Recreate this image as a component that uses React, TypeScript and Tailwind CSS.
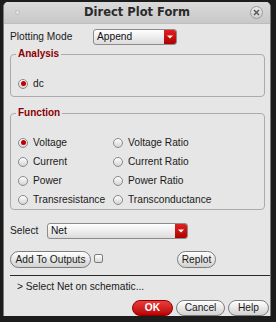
import React from "react";

const font = { fontFamily: '"Liberation Sans", Arial, sans-serif' };

function Radio({ label, checked = false }: { label: string; checked?: boolean }) {
  return (
    <div className="flex items-center h-[19px]">
      <span className="relative w-[10px] h-[10px] rounded-full border border-[#8a8a8a] bg-gradient-to-b from-white to-[#d4d4d4] flex items-center justify-center shrink-0">
        {checked && <span className="w-[5px] h-[5px] rounded-full bg-[#c00000]" />}
      </span>
      <span className="ml-[5px] text-[10.2px] text-[#1a1a1a] whitespace-nowrap">{label}</span>
    </div>
  );
}

function Combo({ value, width }: { value: string; width: string }) {
  return (
    <div className={`${width} h-[16px] flex border border-[#8c8c8c] rounded-[3px] bg-gradient-to-b from-white to-[#dcdcdc] overflow-hidden`}>
      <span className="flex-1 pl-[3px] text-[10.2px] leading-[14px] text-[#111]">{value}</span>
      <span className="w-[12px] h-full bg-gradient-to-b from-[#e02020] to-[#b00000] flex items-center justify-center">
        <svg width="6" height="4" viewBox="0 0 6 4">
          <path d="M0 0.5 H6 L3 3.5 Z" fill="#fff" />
        </svg>
      </span>
    </div>
  );
}

function Btn({ label, width, red = false }: { label: string; width: string; red?: boolean }) {
  return (
    <div
      className={`${width} h-[16px] rounded-full border flex items-center justify-center text-[10.2px] ${
        red
          ? "border-[#8a0000] bg-gradient-to-b from-[#ec3a3a] to-[#b80000] text-white font-bold"
          : "border-[#7c7c7c] bg-gradient-to-b from-white to-[#d2d2d2] text-[#1a1a1a]"
      }`}
    >
      {label}
    </div>
  );
}

function Group({ title, children, className = "" }: { title: string; children: React.ReactNode; className?: string }) {
  return (
    <fieldset className={`ml-[6px] mr-[5px] border border-[#ababab] rounded-[4px] px-[7px] ${className}`}>
      <legend className="-ml-[2px] px-[2px] text-[10px] leading-[12px] font-bold text-[#8b0000]">{title}</legend>
      {children}
    </fieldset>
  );
}

export default function App() {
  return (
    <div className="w-[276px] h-[322px] bg-[#1c1c1c] pt-[2px] pl-[3px] overflow-hidden" style={font}>
      <div className="w-[268px] h-[314px] bg-[#e6e6e6] border-x border-[#7a7a7a] rounded-t-[5px] flex flex-col overflow-hidden">
        {/* Title bar */}
        <div className="relative h-[22px] shrink-0 bg-gradient-to-b from-[#dadada] to-[#c8c8c8] border-b border-[#bdbdbd] flex items-center justify-center">
          <span className="absolute left-[11px] top-[8px] w-[5px] h-[5px] rounded-full bg-[#e4e4e4] border border-[#bcbcbc]" />
          <span className="text-[11.5px] font-bold text-[#2a2a2a]" style={{ fontFamily: '"DejaVu Sans", sans-serif' }}>
            Direct Plot Form
          </span>
          <span className="absolute right-[7px] top-[4px] w-[13px] h-[13px] rounded-full border border-[#9a9a9a] bg-gradient-to-b from-[#e8e8e8] to-[#cfcfcf] flex items-center justify-center">
            <svg width="7" height="7" viewBox="0 0 7 7">
              <path d="M1 1 L6 6 M6 1 L1 6" stroke="#555" strokeWidth="1.4" />
            </svg>
          </span>
        </div>

        {/* Plotting mode */}
        <div className="flex items-center h-[16px] mt-[5px] pl-[6px]">
          <span className="w-[83px] text-[10.2px] text-[#1a1a1a]">Plotting Mode</span>
          <Combo value="Append" width="w-[84px]" />
        </div>

        <Group title="Analysis" className="mt-[3px] pt-[14px] pb-[3px]">
          <Radio label="dc" checked />
        </Group>

        <Group title="Function" className="mt-[10px] pt-[14px] pb-0">
          <div className="grid grid-cols-[95px_1fr]">
            <Radio label="Voltage" checked />
            <Radio label="Voltage Ratio" />
            <Radio label="Current" />
            <Radio label="Current Ratio" />
            <Radio label="Power" />
            <Radio label="Power Ratio" />
            <Radio label="Transresistance" />
            <Radio label="Transconductance" />
          </div>
        </Group>

        {/* Select */}
        <div className="flex items-center h-[16px] mt-[13px] pl-[6px]">
          <span className="w-[37px] text-[10.2px] text-[#1a1a1a]">Select</span>
          <Combo value="Net" width="w-[141px]" />
        </div>

        {/* Add / Replot */}
        <div className="flex items-start h-[17px] mt-[12px] pl-[6px]">
          <Btn label="Add To Outputs" width="w-[81px] h-[17px]" />
          <span className="ml-[3px] mt-[3px] w-[9px] h-[9px] border border-[#7c7c7c] rounded-[2px] bg-gradient-to-b from-white to-[#d8d8d8]" />
          <div className="ml-[74px]">
            <Btn label="Replot" width="w-[39px] h-[17px]" />
          </div>
        </div>

        <div className="ml-[6px] mt-[7px] h-px bg-[#2a2a2a]" />

        <div className="mt-[5px] pl-[13px] text-[10.2px] leading-[12px] text-[#1a1a1a]">&gt; Select Net on schematic...</div>

        {/* Bottom buttons */}
        <div className="flex justify-end gap-[3px] pr-[1px] mt-[7px]">
          <Btn label="OK" width="w-[41px]" red />
          <Btn label="Cancel" width="w-[49px]" />
          <Btn label="Help" width="w-[41px]" />
        </div>
      </div>
    </div>
  );
}
